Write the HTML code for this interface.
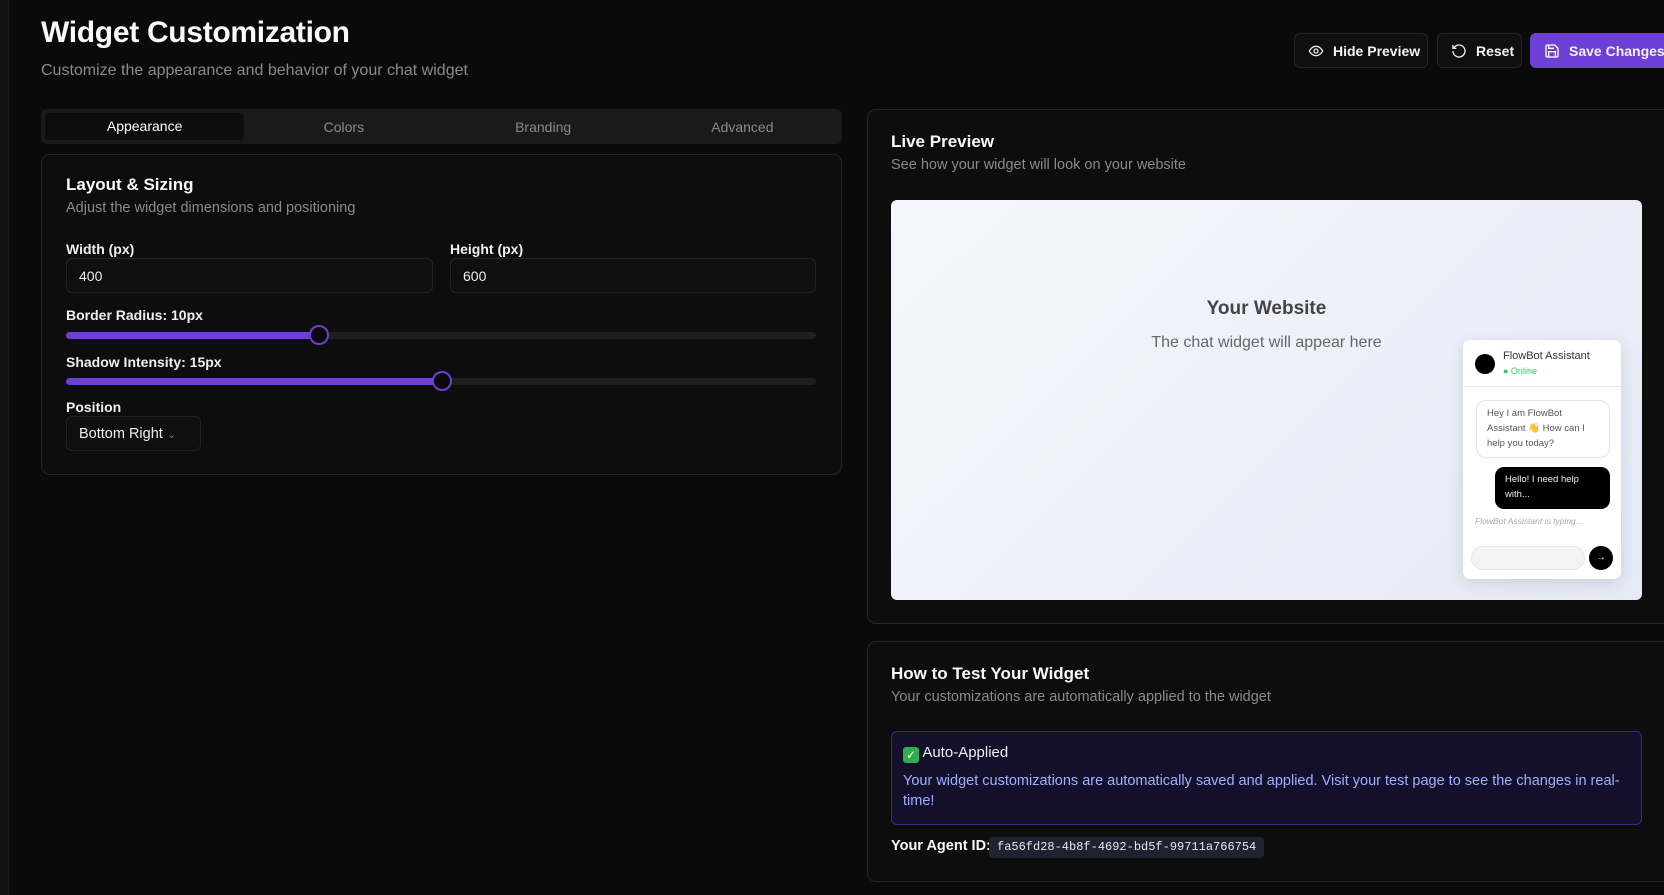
<!DOCTYPE html>
<html><head><meta charset="utf-8"><style>
*{box-sizing:border-box;margin:0;padding:0}
body{width:1664px;height:895px;overflow:hidden;background:#0a0a0a;font-family:"Liberation Sans",sans-serif;color:#fafafa;position:relative}
.abs{position:absolute}
.side{left:0;top:0;width:9px;height:895px;background:#111;border-right:1px solid #1c1c1c}
h1{position:absolute;left:41px;top:16px;font-size:30px;font-weight:bold;letter-spacing:-0.3px}
.sub{left:41px;top:62px;font-size:16px;color:#8a8a8a}
.btn{position:absolute;top:33px;height:35px;border:1px solid #262626;border-radius:6px;background:#0f0f0f;font-size:14px;font-weight:bold;display:flex;align-items:center;gap:9px;padding-left:13px;color:#f2f2f2;white-space:nowrap}
.card{position:absolute;border:1px solid #262626;border-radius:9px;background:#0d0d0d}
.tabs{left:41px;top:109px;width:801px;height:35px;background:#1a1a1a;border-radius:6px;display:flex;align-items:center;font-size:14px;color:#8a8a8a}
.tabs div{flex:1;text-align:center}
.tab1{margin-left:4px;height:27px;line-height:27px;background:#0d0d0d;border-radius:4px;color:#fff}
.lbl{font-size:14px;font-weight:bold;color:#f0f0f0}
.inp{position:absolute;height:35px;border:1px solid #222;border-radius:6px;background:#0f0f0f;font-size:14px;padding:9px 12px;color:#eee;white-space:nowrap}
.track{position:absolute;left:66px;width:750px;height:7px;background:#1e1e1e;border-radius:4px}
.fill{height:7px;background:#6d3fd6;border-radius:4px}
.thumb{position:absolute;width:20px;height:20px;border:2px solid #6d3fd6;border-radius:50%;background:#0a0a0a;top:-7px}
.muted{color:#8a8a8a;font-size:14.5px}
</style></head><body>
<div class="abs side"></div>
<h1>Widget Customization</h1>
<div class="abs sub">Customize the appearance and behavior of your chat widget</div>

<div class="btn" style="left:1294px;width:134px"><svg width="16" height="16" viewBox="0 0 24 24" fill="none" stroke="#eee" stroke-width="2"><path d="M2 12s3.5-7 10-7 10 7 10 7-3.5 7-10 7S2 12 2 12z"/><circle cx="12" cy="12" r="3"/></svg>Hide Preview</div>
<div class="btn" style="left:1437px;width:85px"><svg width="16" height="16" viewBox="0 0 24 24" fill="none" stroke="#eee" stroke-width="2"><path d="M3 12a9 9 0 1 0 3-6.7L3 8"/><path d="M3 3v5h5"/></svg>Reset</div>
<div class="btn" style="left:1530px;width:150px;background:#6d3fd6;border-color:#6d3fd6"><svg width="16" height="16" viewBox="0 0 24 24" fill="none" stroke="#fff" stroke-width="2"><path d="M19 21H5a2 2 0 0 1-2-2V5a2 2 0 0 1 2-2h11l5 5v11a2 2 0 0 1-2 2z"/><path d="M17 21v-8H7v8M7 3v5h8"/></svg>Save Changes</div>

<div class="abs tabs"><div class="tab1">Appearance</div><div>Colors</div><div>Branding</div><div>Advanced</div></div>

<div class="card" style="left:41px;top:154px;width:801px;height:321px"></div>
<div class="abs" style="left:66px;top:175px;font-size:17px;font-weight:bold">Layout &amp; Sizing</div>
<div class="abs muted" style="left:66px;top:200px">Adjust the widget dimensions and positioning</div>
<div class="abs lbl" style="left:66px;top:241px">Width (px)</div>
<div class="abs lbl" style="left:450px;top:241px">Height (px)</div>
<div class="inp" style="left:66px;top:258px;width:367px">400</div>
<div class="inp" style="left:450px;top:258px;width:366px">600</div>
<div class="abs lbl" style="left:66px;top:307px">Border Radius: 10px</div>
<div class="track" style="top:332px"><div class="fill" style="width:253px"></div><div class="thumb" style="left:243px"></div></div>
<div class="abs lbl" style="left:66px;top:354px">Shadow Intensity: 15px</div>
<div class="track" style="top:378px"><div class="fill" style="width:376px"></div><div class="thumb" style="left:366px"></div></div>
<div class="abs lbl" style="left:66px;top:399px">Position</div>
<div class="inp" style="left:66px;top:416px;width:135px;font-size:14.5px">Bottom Right <span style="color:#777;font-size:11px">&#8964;</span></div>

<div class="card" style="left:867px;top:109px;width:810px;height:515px"></div>
<div class="abs" style="left:891px;top:132px;font-size:17px;font-weight:bold">Live Preview</div>
<div class="abs muted" style="left:891px;top:157px">See how your widget will look on your website</div>
<div class="abs" style="left:891px;top:200px;width:751px;height:400px;border-radius:6px;background:linear-gradient(135deg,#f5f7fd,#e6e9f6)"></div>
<div class="abs" style="left:891px;top:298px;width:751px;text-align:center;color:#444;font-size:19px;font-weight:bold">Your Website</div>
<div class="abs" style="left:891px;top:334px;width:751px;text-align:center;color:#666;font-size:16px">The chat widget will appear here</div>
<div class="abs" style="left:1463px;top:340px;width:158px;height:239px;background:#fff;border-radius:7px;box-shadow:0 4px 15px rgba(0,0,0,.12);color:#333">
 <div class="abs" style="left:12px;top:14px;width:20px;height:20px;border-radius:50%;background:#000"></div>
 <div class="abs" style="left:40px;top:10px;font-size:11px">FlowBot Assistant</div>
 <div class="abs" style="left:40px;top:26px;font-size:9px;color:#2ecc71">● Online</div>
 <div class="abs" style="left:0;top:46px;width:158px;border-top:1px solid #e6e6e6"></div>
 <div class="abs" style="left:13px;top:60px;width:134px;height:58px;border:1px solid #e4e4e4;border-radius:10px;font-size:9.5px;line-height:15px;padding:5px 10px;color:#555">Hey I am FlowBot Assistant 👋 How can I help you today?</div>
 <div class="abs" style="left:32px;top:127px;width:115px;height:42px;background:#000;color:#eee;border-radius:9px;font-size:9.5px;line-height:15px;padding:5px 10px">Hello! I need help with...</div>
 <div class="abs" style="left:12px;top:176px;font-size:8.5px;font-style:italic;color:#aaa">FlowBot Assistant is typing...</div>
 <div class="abs" style="left:8px;top:206px;width:114px;height:24px;border-radius:12px;background:#f4f4f4;border:1px solid #e8e8e8"></div>
 <div class="abs" style="left:126px;top:206px;width:24px;height:24px;border-radius:50%;background:#000;color:#fff;font-size:10px;text-align:center;line-height:24px">→</div>
</div>

<div class="card" style="left:867px;top:641px;width:810px;height:241px"></div>
<div class="abs" style="left:891px;top:664px;font-size:17px;font-weight:bold">How to Test Your Widget</div>
<div class="abs muted" style="left:891px;top:689px">Your customizations are automatically applied to the widget</div>
<div class="abs" style="left:891px;top:731px;width:751px;height:94px;border:1px solid #3b2a8a;border-radius:6px;background:#140f2a"></div>
<div class="abs" style="left:903px;top:744px;font-size:15px;color:#f0f0f0;white-space:nowrap"><span style="display:inline-block;width:16px;height:16px;background:#2eae4f;border-radius:3px;color:#fff;font-size:12px;text-align:center;line-height:16px;vertical-align:-2px">✓</span> Auto-Applied</div>
<div class="abs" style="left:903px;top:771px;width:720px;font-size:14.5px;line-height:20px;color:#9db3ff">Your widget customizations are automatically saved and applied. Visit your test page to see the changes in real-time!</div>
<div class="abs" style="left:891px;top:838px;font-size:14.5px;font-weight:bold;white-space:nowrap">Your Agent ID:</div>
<div class="abs" style="left:989px;top:837px;width:275px;height:21px;background:#1e2330;border-radius:3px;font-family:'Liberation Mono',monospace;font-size:12px;line-height:21px;padding-left:8px;color:#e8e8e8;white-space:nowrap;overflow:hidden">fa56fd28-4b8f-4692-bd5f-99711a766754</div>
</body></html>
